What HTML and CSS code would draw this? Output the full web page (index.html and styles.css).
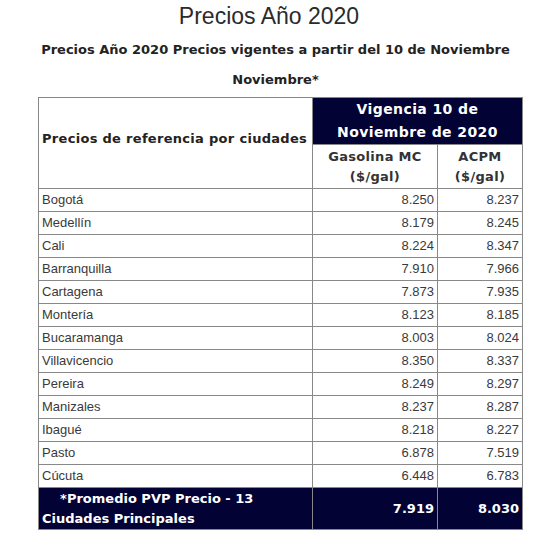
FILE: index.html
```html
<!DOCTYPE html>
<html lang="es">
<head>
    <meta charset="UTF-8">
    <meta name="viewport" content="width=device-width, initial-scale=1.0">
    <title>Precios Año 2020</title>
    <link rel="stylesheet" href="styles.css">
</head>
<body>
    <h1 class="title">Precios Año 2020</h1>

    <h3 class="subtitle">Precios Año 2020 Precios vigentes a partir del 10 de Noviembre <span class="sub-line">Noviembre*</span></h3>

    <table class="prices">
        <thead>
            <tr class="head-top">
                <th rowspan="2" class="city-head">Precios de referencia por ciudades</th>
                <th colspan="2" class="dark">Vigencia 10 de<br>Noviembre de 2020</th>
            </tr>
            <tr class="head-sub">
                <th>Gasolina MC<br>($/gal)</th>
                <th>ACPM<br>($/gal)</th>
            </tr>
        </thead>
        <tbody id="rows"></tbody>
        <tfoot>
            <tr class="dark foot">
                <td class="foot-label">&nbsp; &nbsp; *Promedio PVP Precio - 13<br>Ciudades Principales</td>
                <td class="num">7.919</td>
                <td class="num">8.030</td>
            </tr>
        </tfoot>
    </table>

    <script>
        const cities = [
            ["Bogotá", "8.250", "8.237"],
            ["Medellín", "8.179", "8.245"],
            ["Cali", "8.224", "8.347"],
            ["Barranquilla", "7.910", "7.966"],
            ["Cartagena", "7.873", "7.935"],
            ["Montería", "8.123", "8.185"],
            ["Bucaramanga", "8.003", "8.024"],
            ["Villavicencio", "8.350", "8.337"],
            ["Pereira", "8.249", "8.297"],
            ["Manizales", "8.237", "8.287"],
            ["Ibagué", "8.218", "8.227"],
            ["Pasto", "6.878", "7.519"],
            ["Cúcuta", "6.448", "6.783"]
        ];

        const body = document.getElementById('rows');
        cities.forEach(([name, gas, acpm]) => {
            const tr = document.createElement('tr');
            tr.innerHTML = `<td>${name}</td><td class="num">${gas}</td><td class="num">${acpm}</td>`;
            body.appendChild(tr);
        });
    </script>
</body>
</html>
```

FILE: styles.css
```css
body {
    margin: 0;
    background: #fff;
    color: #333;
    font-family: "Liberation Sans", Arial, sans-serif;
}

.title {
    margin: 2px 0 0;
    text-align: center;
    font-size: 23px;
    font-weight: normal;
    line-height: 28px;
    color: #2b2b2b;
    padding-right: 9px;
}

.subtitle {
    margin: 5px auto 0;
    width: 500px;
    padding-left: 4px;
    text-align: center;
    font-family: "DejaVu Sans", Verdana, sans-serif;
    font-size: 13px;
    line-height: 30px;
    color: #222;
}

.sub-line {
    display: block;
}

.prices {
    margin: 2px 0 0 38px;
    width: 485px;
    border-collapse: collapse;
    border: 1px solid #333;
    font-size: 13px;
}

.prices th,
.prices td {
    border: 1px solid #888;
    padding: 0 3px;
}

.prices th {
    font-family: "DejaVu Sans", Verdana, sans-serif;
    font-size: 13px;
}

.city-head {
    width: 267px;
    text-align: left;
    color: #222;
    white-space: nowrap;
    letter-spacing: 0.3px;
    padding-bottom: 10px !important;
}

.dark {
    background: #020235;
    color: #fff;
}

.head-top th.dark {
    height: 45px;
    font-size: 14px;
    letter-spacing: 0.4px;
    line-height: 23px;
    text-align: center;
}

.head-sub th {
    height: 43px;
    width: 120px;
    line-height: 20px;
    letter-spacing: 0.3px;
    color: #333;
}

.head-sub th + th {
    width: 79px;
}

.prices tbody td {
    height: 22px;
    line-height: 22px;
    color: #3a3a3a;
}

.num {
    text-align: right;
}

.foot td {
    height: 41px;
    font-family: "DejaVu Sans", Verdana, sans-serif;
    font-weight: bold;
    font-size: 13px;
    line-height: 20px;
    color: #fff;
}
```
